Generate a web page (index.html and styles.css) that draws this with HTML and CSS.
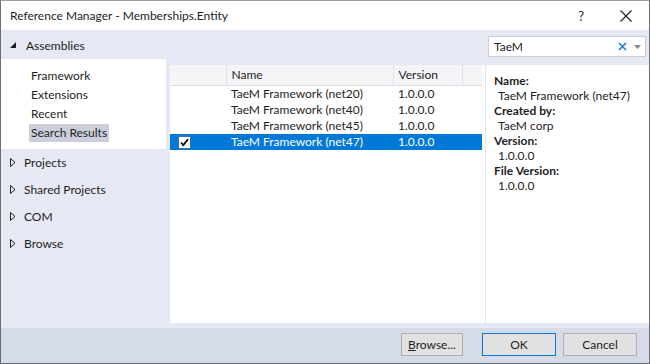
FILE: index.html
```html
<!DOCTYPE html>
<html lang="en">
  <head>
    <meta charset="UTF-8" />
    <title>Reference Manager - Memberships.Entity</title>
    <link rel="stylesheet" href="styles.css">
  </head>
  <body>
    <div class="window">
      <header class="titlebar">
        <span class="title">Reference Manager - Memberships.Entity</span>
        <span class="help">?</span>
        <svg class="close" width="12" height="12" viewBox="0 0 12 12">
          <path d="M0.5 0.5 L11.5 11.5 M11.5 0.5 L0.5 11.5" stroke="#1e1e1e" stroke-width="1.1" fill="none" />
        </svg>
      </header>

      <div class="main">
        <nav class="sidebar">
          <div class="group open">
            <svg class="arrow" width="7" height="7" viewBox="0 0 7 7"><path d="M6 0 L6 6 L0 6 Z" fill="#1e1e1e" /></svg>
            <span>Assemblies</span>
          </div>
          <ul class="sublist">
            <li><span>Framework</span></li>
            <li><span>Extensions</span></li>
            <li><span>Recent</span></li>
            <li><span class="selected">Search Results</span></li>
          </ul>
          <div class="group">
            <svg class="arrow" width="6" height="9" viewBox="0 0 6 9"><path d="M0.5 0.5 L5 4.5 L0.5 8.5 Z" fill="none" stroke="#1e1e1e" /></svg>
            <span>Projects</span>
          </div>
          <div class="group">
            <svg class="arrow" width="6" height="9" viewBox="0 0 6 9"><path d="M0.5 0.5 L5 4.5 L0.5 8.5 Z" fill="none" stroke="#1e1e1e" /></svg>
            <span>Shared Projects</span>
          </div>
          <div class="group">
            <svg class="arrow" width="6" height="9" viewBox="0 0 6 9"><path d="M0.5 0.5 L5 4.5 L0.5 8.5 Z" fill="none" stroke="#1e1e1e" /></svg>
            <span>COM</span>
          </div>
          <div class="group">
            <svg class="arrow" width="6" height="9" viewBox="0 0 6 9"><path d="M0.5 0.5 L5 4.5 L0.5 8.5 Z" fill="none" stroke="#1e1e1e" /></svg>
            <span>Browse</span>
          </div>
        </nav>

        <section class="content">
          <div class="searchbar">
            <div class="search">
              <span class="query">TaeM</span>
              <svg class="clear" width="9" height="9" viewBox="0 0 9 9">
                <path d="M1 1 L8 8 M8 1 L1 8" stroke="#1c7bd4" stroke-width="1.6" fill="none" />
              </svg>
              <svg class="drop" width="7" height="4" viewBox="0 0 7 4"><path d="M0 0 L7 0 L3.5 4 Z" fill="#8a8a8a" /></svg>
            </div>
          </div>

          <div class="panes">
            <div class="list">
              <table>
                <colgroup>
                  <col class="c-check" />
                  <col class="c-name" />
                  <col class="c-version" />
                  <col class="c-fill" />
                </colgroup>
                <thead>
                  <tr>
                    <th></th>
                    <th>Name</th>
                    <th>Version</th>
                    <th></th>
                  </tr>
                </thead>
                <tbody>
                  <tr>
                    <td></td>
                    <td>TaeM Framework (net20)</td>
                    <td>1.0.0.0</td>
                    <td></td>
                  </tr>
                  <tr>
                    <td></td>
                    <td>TaeM Framework (net40)</td>
                    <td>1.0.0.0</td>
                    <td></td>
                  </tr>
                  <tr>
                    <td></td>
                    <td>TaeM Framework (net45)</td>
                    <td>1.0.0.0</td>
                    <td></td>
                  </tr>
                  <tr class="active">
                    <td>
                      <svg class="check" width="13" height="13" viewBox="0 0 13 13">
                        <rect x="0.5" y="0.5" width="12" height="12" fill="#fff" stroke="#3c6fa8" />
                        <path d="M3 6.5 L5.3 9.2 L10 3.2" stroke="#000" stroke-width="1.8" fill="none" />
                      </svg>
                    </td>
                    <td>TaeM Framework (net47)</td>
                    <td>1.0.0.0</td>
                    <td></td>
                  </tr>
                </tbody>
              </table>
            </div>

            <aside class="details">
              <div class="label">Name:</div>
              <div class="value">TaeM Framework (net47)</div>
              <div class="label">Created by:</div>
              <div class="value">TaeM corp</div>
              <div class="label">Version:</div>
              <div class="value">1.0.0.0</div>
              <div class="label">File Version:</div>
              <div class="value">1.0.0.0</div>
            </aside>
          </div>
        </section>
      </div>

      <footer class="buttons">
        <button class="browse"><u>B</u>rowse...</button>
        <button class="ok">OK</button>
        <button class="cancel">Cancel</button>
      </footer>
    </div>
  </body>
</html>
```

FILE: styles.css
```css
* {
  box-sizing: border-box;
}

html,
body {
  width: 100%;
  height: 100%;
  margin: 0;
  background-color: #fff;
}

body {
  font-family: Lato, "Liberation Sans", sans-serif;
  font-size: 12px;
  color: #1e1e1e;
}

.window {
  width: 650px;
  height: 364px;
  display: flex;
  flex-direction: column;
  border: 1px solid #6e6e72;
  border-top-color: #9a9a9a;
}

.titlebar {
  height: 29px;
  display: flex;
  align-items: center;
  padding-left: 9px;
  background-color: #fff;
}

.title {
  flex: 1;
}

.help {
  font-size: 13px;
  margin-right: 36px;
}

.close {
  margin-right: 17px;
}

.main {
  flex: 1;
  display: flex;
  background-color: #e6e9f4;
}

/* left navigation */

.sidebar {
  width: 169px;
  display: flex;
  flex-direction: column;
}

.group {
  height: 27px;
  display: flex;
  align-items: center;
  padding-left: 9px;
}

.group.open {
  height: 29px;
  padding-top: 1px;
}

.group .arrow {
  margin-right: 8px;
}

.group.open .arrow {
  margin-right: 9px;
}

.sublist {
  list-style: none;
  margin: 0;
  padding: 7px 0 7px 28px;
  background-color: #fff;
  width: 165px;
}

.sublist li {
  height: 19px;
  line-height: 19px;
}

.sublist span {
  display: inline-block;
  padding: 0 2px;
  line-height: 18px;
}

.sublist .selected {
  background-color: #cccedb;
}

/* right side */

.content {
  flex: 1;
  display: flex;
  flex-direction: column;
}

.searchbar {
  height: 35px;
  display: flex;
  justify-content: flex-end;
  padding: 6px 3px 0 0;
}

.search {
  width: 158px;
  height: 21px;
  display: flex;
  align-items: center;
  padding: 0 4px 0 5px;
  background-color: #fff;
  border: 1px solid #cbcdd6;
}

.search .query {
  flex: 1;
}

.search .clear {
  margin-right: 7px;
}

.panes {
  flex: 1;
  display: flex;
  margin-bottom: 5px;
}

.list {
  width: 316px;
  background-color: #fff;
  border-right: 1px solid #e3e4ec;
}

table {
  width: 312px;
  border-collapse: collapse;
  table-layout: fixed;
}

.c-check {
  width: 56px;
}

.c-name {
  width: 167px;
}

.c-version {
  width: 69px;
}

.c-fill {
  width: 20px;
}

th {
  height: 20px;
  padding: 0 0 0 5px;
  font-weight: normal;
  text-align: left;
  background-color: #f5f5f8;
  border-right: 1px solid #e0e1e8;
  border-bottom: 1px solid #dcdde5;
}

th:last-child {
  border-right: none;
}

td {
  height: 16px;
  padding: 0 0 0 5px;
  white-space: nowrap;
  line-height: 16px;
}

tr.active td {
  background-color: #0078d7;
  color: #fff;
}

tr.active td:first-child {
  padding-left: 8px;
}

.check {
  display: block;
  margin-top: 1px;
}

.details {
  flex: 1;
  background-color: #fff;
  padding: 8px 0 0 8px;
  line-height: 15px;
}

.details .label {
  font-weight: bold;
}

.details .value {
  padding-left: 4px;
}

/* bottom buttons */

.buttons {
  height: 35px;
  display: flex;
  justify-content: flex-end;
  align-items: flex-start;
  padding: 5px 12px 0 0;
  background-color: #d6dbe9;
}

button {
  height: 23px;
  font-family: inherit;
  font-size: 12px;
  color: #1e1e1e;
  background-color: #e1e1e1;
  border: 1px solid #adadad;
  padding: 0;
}

.browse {
  width: 62px;
  margin-right: 19px;
}

.ok {
  width: 74px;
  margin-right: 7px;
  border-color: #0078d7;
}

.cancel {
  width: 74px;
}
```
